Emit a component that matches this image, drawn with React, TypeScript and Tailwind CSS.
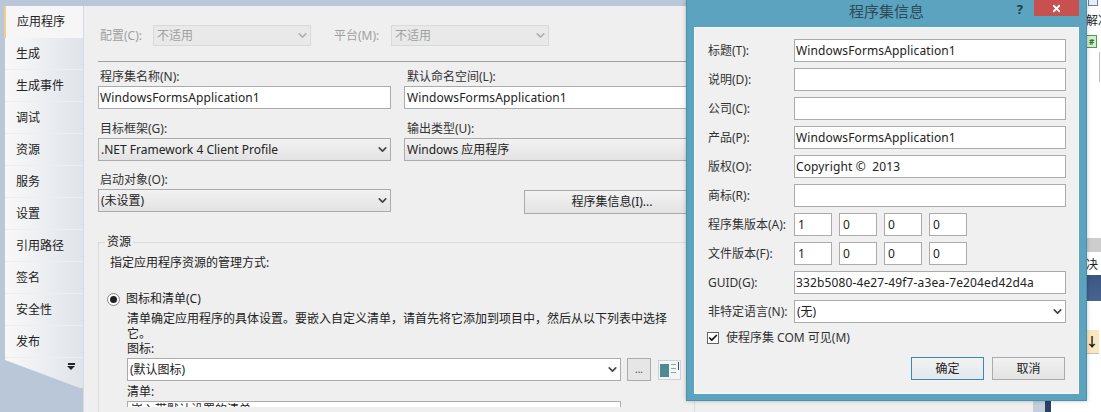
import React from 'react';
import { ChevronDown, Check, X } from 'lucide-react';

const tabs = ['生成', '生成事件', '调试', '资源', '服务', '设置', '引用路径', '签名', '安全性', '发布'];

const Field: React.FC<{ value?: string; className?: string }> = ({ value, className = '' }) => (
  <div className={`h-[23px] bg-white border border-[#ababab] pl-[1px] flex items-center text-[#222] tracking-[0.13px] whitespace-pre overflow-hidden ${className}`}>{value}</div>
);

const Combo: React.FC<{ value: string; className?: string; flat?: boolean }> = ({ value, className = '', flat }) => (
  <div className={`h-[23px] border border-[#ababab] pl-[2px] pr-[1px] flex items-center justify-between text-[#222] whitespace-nowrap ${flat ? 'bg-white' : 'bg-gradient-to-b from-[#f2f2f2] to-[#e3e3e3]'} ${className}`}>
    <span>{value}</span>
    <ChevronDown className="w-[13px] h-[13px] text-[#444]" strokeWidth={3} />
  </div>
);

const Row: React.FC<{ label: string; children: React.ReactNode }> = ({ label, children }) => (
  <div className="flex items-center h-[23px]">
    <div className="w-[86px] whitespace-nowrap text-[#333] shrink-0">{label}</div>
    {children}
  </div>
);

const Version: React.FC<{ label: string }> = ({ label }) => (
  <Row label={label}>
    <div className="flex gap-[7px]">
      <Field value="1" className="w-[38px] pl-[3px]" />
      <Field value="0" className="w-[38px] pl-[3px]" />
      <Field value="0" className="w-[38px] pl-[3px]" />
      <Field value="0" className="w-[38px] pl-[3px]" />
    </div>
  </Row>
);

const Sidebar = () => (
  <div className="w-[83px] shrink-0 pl-[4px] h-full">
    <div className="h-[32px] bg-[#f6f6f6] border-l-2 border-[#eccf8e] flex items-center pl-[11px] text-[#222]">应用程序</div>
    <div className="h-[350px] ml-[1px] bg-gradient-to-r from-[#f8f8f8] to-[#dfe4ea] [clip-path:polygon(0_0,100%_0,100%_100%,96%_100%,0_92%)] relative">
      {tabs.map(tab => (
        <div key={tab} className="h-[32px] flex items-center pl-[11px] text-[#222] border-b border-[#eeeeee]">{tab}</div>
      ))}
      <div className="absolute left-[62px] top-[325px] flex flex-col items-center gap-[1px]">
        <div className="w-[7px] h-[2px] bg-[#222]" />
        <div className="w-0 h-0 border-x-[4px] border-x-transparent border-t-[4px] border-t-[#222]" />
      </div>
    </div>
  </div>
);

const Main = () => (
  <div className="w-[950px] shrink-0 h-full bg-[#efefef] border-l border-[#d5dbe2] pl-[14px] overflow-hidden">
    <div className="flex items-center h-[21px] mt-[19px] text-[#a0a0a0]">
      <span className="w-[55px] pl-[2px]">配置(C):</span>
      <div className="w-[158px] h-[21px] border border-[#d9d9d9] bg-[#e9e9e9] pl-[3px] pr-[1px] flex items-center justify-between">
        <span>不适用</span><ChevronDown className="w-[13px] h-[13px] text-[#b0b0b0]" strokeWidth={3} />
      </div>
      <span className="w-[57px] ml-[23px]">平台(M):</span>
      <div className="w-[158px] h-[21px] border border-[#d9d9d9] bg-[#e9e9e9] pl-[3px] pr-[1px] flex items-center justify-between">
        <span>不适用</span><ChevronDown className="w-[13px] h-[13px] text-[#b0b0b0]" strokeWidth={3} />
      </div>
    </div>
    <div className="h-px bg-[#a0a0a0] mt-[15px]" />
    <div className="flex gap-[13px] mt-[6px]">
      <div className="w-[293px] shrink-0">
        <div className="h-[18px] pl-[2px] flex items-center text-[#333]">程序集名称(N):</div>
        <Field value="WindowsFormsApplication1" className="h-[22px]" />
        <div className="h-[18px] mt-[11px] pl-[2px] flex items-center text-[#333]">目标框架(G):</div>
        <Combo value=".NET Framework 4 Client Profile" className="h-[22px]" />
        <div className="h-[18px] mt-[10px] pl-[2px] flex items-center text-[#333]">启动对象(O):</div>
        <Combo value="(未设置)" className="h-[22px]" />
      </div>
      <div className="w-[400px] shrink-0">
        <div className="h-[18px] pl-[3px] flex items-center text-[#333]">默认命名空间(L):</div>
        <Field value="WindowsFormsApplication1" className="h-[22px] pl-[2px]" />
        <div className="h-[18px] mt-[11px] pl-[3px] flex items-center text-[#333]">输出类型(U):</div>
        <Combo value="Windows 应用程序" className="h-[22px]" />
        <div className="ml-[120px] mt-[29px] h-[24px] w-[176px] border border-[#ababab] bg-gradient-to-b from-[#f2f2f2] to-[#e3e3e3] flex items-center justify-center text-[#222]">程序集信息(I)...</div>
      </div>
    </div>
    <div className="relative mt-[28px] w-[597px] h-[176px] border-t border-x border-[#dcdcdc]">
      <span className="absolute -top-[10px] left-[6px] px-[2px] bg-[#efefef] text-[#222]">资源</span>
      <div className="pl-[11px] pt-[11px] text-[#222]">指定应用程序资源的管理方式:</div>
      <div className="flex items-center gap-[6px] pl-[8px] mt-[18px] h-[18px] text-[#222]">
        <div className="w-[13px] h-[13px] rounded-full border border-[#888] bg-white flex items-center justify-center">
          <div className="w-[7px] h-[7px] rounded-full bg-[#222]" />
        </div>
        <span>图标和清单(C)</span>
      </div>
      <div className="pl-[28px] w-[590px] text-[#222] leading-[15px] mt-[3px]">清单确定应用程序的具体设置。要嵌入自定义清单，请首先将它添加到项目中，然后从以下列表中选择它。</div>
      <div className="pl-[28px] h-[18px] -mt-[1px] flex items-center text-[#222]">图标:</div>
      <div className="flex items-center pl-[28px]">
        <Combo value="(默认图标)" className="w-[494px] h-[22px]" flat />
        <div className="w-[24px] h-[23px] ml-[6px] border border-[#ababab] bg-[#e6e6e6] flex items-center justify-center text-[#444] text-[10px]">...</div>
        <svg className="ml-[7px]" width="23" height="20" viewBox="0 0 23 20">
          <rect x="0.5" y="0.5" width="22" height="19" fill="#f4f6f6" stroke="#c9d2d6" />
          <rect x="2" y="4" width="9" height="13" fill="#4f8a94" />
          <rect x="13" y="4" width="5" height="1" fill="#8aa" />
          <rect x="13" y="8" width="5" height="1" fill="#8aa" />
          <rect x="13" y="12" width="5" height="1" fill="#8aa" />
          <rect x="20" y="2" width="1" height="8" fill="#447" />
        </svg>
      </div>
      <div className="pl-[28px] h-[18px] mt-[2px] flex items-center text-[#222]">清单:</div>
      <div className="ml-[28px] w-[494px] h-[6px] bg-white border-t border-x border-[#ababab] overflow-hidden leading-[15px] pl-[3px] text-[#222]">嵌入带默认设置的清单</div>
    </div>
  </div>
);

const Dialog = () => (
  <div className="absolute left-[686px] top-0 w-[401px] h-[401px] bg-[#5ba3bf] border border-[#4b8fa9] border-t-0 shadow-[0_0_4px_rgba(0,0,0,0.25)] flex flex-col px-[7px] pb-[6px]">
    <div className="h-[27px] shrink-0 flex items-center justify-center relative pb-[5px] text-[15px] text-[#2f4a57]">
      程序集信息
      <span className="absolute right-[56px] top-0 font-bold text-[13px] text-[#1e3d4d]">?</span>
      <div className="absolute right-0 top-0 w-[45px] h-[16px] bg-[#c75050] flex items-center justify-center">
        <X className="w-[11px] h-[11px] text-white" strokeWidth={4} />
      </div>
    </div>
    <div className="flex-1 bg-[#f0f0f0] border border-[#f8f8f8] pl-[13px] pr-[12px] pt-[11px] flex flex-col gap-[6px]">
      <Row label="标题(T):"><Field value="WindowsFormsApplication1" className="flex-1" /></Row>
      <Row label="说明(D):"><Field className="flex-1" /></Row>
      <Row label="公司(C):"><Field className="flex-1" /></Row>
      <Row label="产品(P):"><Field value="WindowsFormsApplication1" className="flex-1" /></Row>
      <Row label="版权(O):"><Field value="Copyright ©  2013" className="flex-1" /></Row>
      <Row label="商标(R):"><Field className="flex-1" /></Row>
      <Version label="程序集版本(A):" />
      <Version label="文件版本(F):" />
      <Row label="GUID(G):"><Field value="332b5080-4e27-49f7-a3ea-7e204ed42d4a" className="flex-1" /></Row>
      <Row label="非特定语言(N):"><Combo value="(无)" className="flex-1" flat /></Row>
      <div className="flex items-center gap-[7px] h-[16px] mt-[1px] -ml-[1px] text-[#333]">
        <div className="w-[12px] h-[12px] border border-[#666] bg-white flex items-center justify-center">
          <Check className="w-[10px] h-[10px] text-[#111]" strokeWidth={4} />
        </div>
        <span>使程序集 COM 可见(M)</span>
      </div>
      <div className="flex justify-end gap-[8px] mt-[5px] mr-[1px]">
        <div className="w-[73px] h-[23px] border border-[#3a87b8] bg-gradient-to-b from-[#f2f2f2] to-[#e3e8ec] flex items-center justify-center text-[#222]">确定</div>
        <div className="w-[73px] h-[23px] border border-[#ababab] bg-gradient-to-b from-[#f2f2f2] to-[#e3e3e3] flex items-center justify-center text-[#222]">取消</div>
      </div>
    </div>
  </div>
);

const RightStrip = () => (
  <div className="flex-1 -mt-[6px] h-[412px] flex overflow-hidden">
    <div className="w-[12px] shrink-0 bg-[#c3cede]" />
    <div className="w-[6px] shrink-0 bg-[#2c3f66]" />
    <div className="flex-1 bg-white pl-[35px] flex flex-col text-[#222] overflow-hidden">
      <div className="h-[6px] ml-[2px] w-[10px] border-x border-b border-[#6f7fa8] bg-[#e8eef8]" />
      <div className="h-[14px] mt-[8px] whitespace-nowrap leading-[14px]">解决</div>
      <div className="h-[13px] w-[11px] mt-[7px] bg-[#d9edc8] border border-[#4f9a4f] text-[8px] leading-[11px] text-[#1f7a3a] font-bold flex items-center justify-center">#</div>
      <div className="h-[30px] w-[1px] mt-[4px] ml-[13px] bg-[#bdbdbd]" />
      <div className="h-[14px] mt-[156px] -ml-[1px] bg-[#cdcdcd]" />
      <div className="h-[14px] mt-[6px] leading-[14px] whitespace-nowrap">决</div>
      <div className="h-[26px] mt-[3px] -ml-[1px] bg-gradient-to-b from-[#3b5682] to-[#4a6491]" />
      <div className="h-[24px] w-[14px] mt-[29px] -ml-[1px] bg-[#fbe6c0] border-b border-[#c9c2b4] flex items-center justify-center text-[13px] font-bold text-[#111]">↓</div>
    </div>
  </div>
);

export default function App() {
  return (
    <div className="relative w-[1101px] h-[412px] overflow-hidden bg-[#b9c7d9] text-[12px] font-['Noto_Sans','Noto_Sans_CJK_SC',sans-serif]">
      <div className="flex h-[412px] pt-[6px]">
        <Sidebar />
        <Main />
        <RightStrip />
      </div>
      <Dialog />
    </div>
  );
}
